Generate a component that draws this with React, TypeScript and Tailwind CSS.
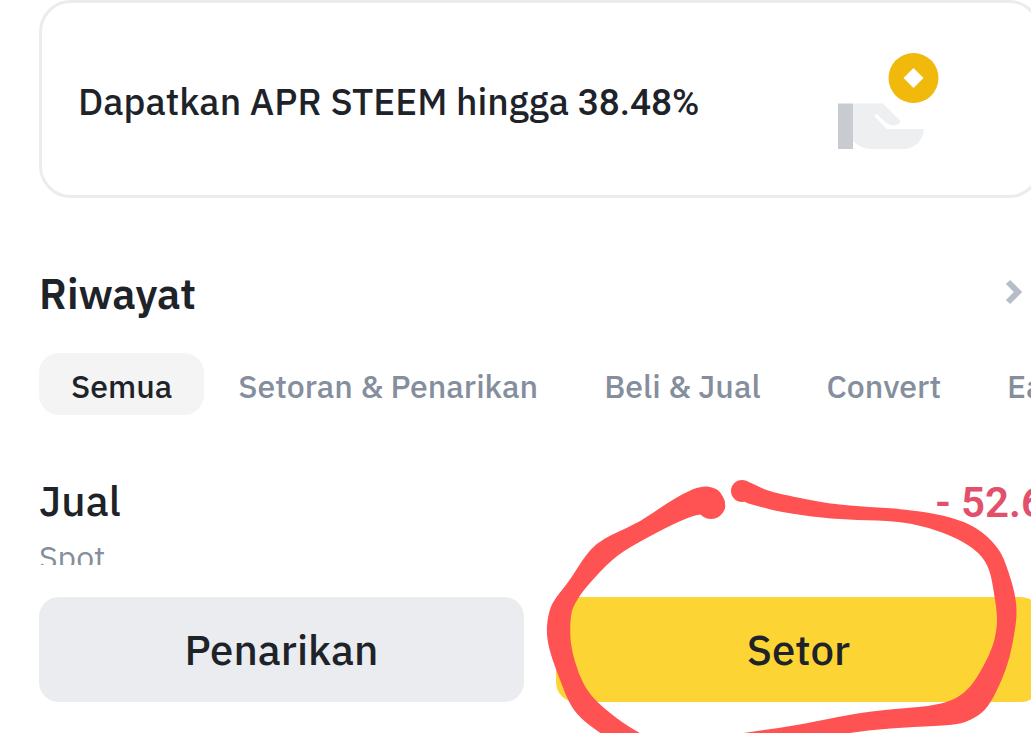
import { useState } from 'react';

type Point = [number, number];

const tabs = ['Semua', 'Setoran & Penarikan', 'Beli & Jual', 'Convert', 'Earn'];

// Outline of the left part of the marker stroke
const markerLeft: Point[] = [
  [711, 518], [724, 513], [726, 503], [720, 491], [712, 487], [703, 486], [690, 490], [667, 503],
  [640, 522], [613, 534], [597, 543], [585, 556], [568, 583], [556, 597], [549, 610], [546, 632],
  [550, 653], [560, 680], [569, 703], [580, 718], [600, 733], [640, 760], [690, 760], [639, 733],
  [617, 719], [590, 696], [578, 673], [571, 647], [570, 630], [571, 613], [575, 603], [585, 588],
  [613, 558], [637, 543], [677, 522], [701, 513],
];

// Outline of the part that runs over the top, down the right side and back
const markerRight: Point[] = [
  [741, 480], [750, 482], [763, 489], [780, 494], [830, 504], [870, 507], [903, 509], [937, 514],
  [963, 521], [983, 532], [1000, 550], [1007, 567], [1015, 593], [1017, 613], [1015, 630],
  [1010, 657], [1002, 680], [990, 704], [980, 715], [962, 724], [937, 726], [890, 728], [847, 733],
  [800, 742], [700, 742], [741, 733], [780, 728], [813, 722], [863, 712], [907, 708], [930, 706],
  [952, 701], [968, 690], [980, 673], [993, 647], [997, 627], [997, 613], [994, 593], [990, 570],
  [980, 553], [957, 538], [927, 527], [897, 521], [857, 520], [823, 518], [780, 512], [757, 506],
  [740, 501],
];

const smoothPath = (points: Point[]) => {
  const mid = (a: Point, b: Point) => `${(a[0] + b[0]) / 2} ${(a[1] + b[1]) / 2}`;
  const last = points[points.length - 1];
  const curves = points.map((p, i) => `Q ${p[0]} ${p[1]} ${mid(p, points[(i + 1) % points.length])}`);
  return `M ${mid(last, points[0])} ${curves.join(' ')} Z`;
};

const EarnIcon = () => (
  <svg width="101" height="97" viewBox="0 0 101 97" aria-hidden="true" className="shrink-0">
    <path d="M0 50.500H15V96H0Z" fill="#c8cbd0" />
    <path
      d="M15 50.500H45L62 67.500Q63 69 61.500 70.500Q58 73 53 72Q50 71.500 47 69L40 62Q38 60.500 37 62Q36 63 37 64L49 76H86Q84 91 72 95Q69 96 65 96H34Q23 96 15 88Z"
      fill="#edeff1"
    />
    <circle cx="75.500" cy="25" r="25" fill="#f0b90b" />
    <path d="M75.500 15L85.500 25L75.500 35L65.500 25Z" fill="#fff" />
  </svg>
);

const MarkerCircle = () => (
  <svg
    width="491"
    height="290"
    viewBox="540 470 491 290"
    aria-hidden="true"
    className="pointer-events-none absolute -left-4 -top-[127px] max-w-none"
    fill="#ff5252"
  >
    <path d={smoothPath(markerLeft)} />
    <circle cx="711" cy="505" r="14" />
    <path d={smoothPath(markerRight)} />
    <circle cx="742" cy="491" r="11" />
  </svg>
);

const App = () => {
  const [activeTab, setActiveTab] = useState('Semua');

  return (
    <div className="flex h-screen flex-col overflow-hidden bg-white font-['IBM_Plex_Sans','Noto_Sans',sans-serif] font-medium text-[#1e2329]">
      <main className="-mr-[10px] min-h-0 flex-1 overflow-hidden pl-[39px]">
        {/* Earn banner */}
        <a
          href="#earn"
          className="flex h-[198px] items-center justify-between rounded-[32px] border-[3px] border-[#eaecef] pl-9 pr-[99px] pt-1"
        >
          <span className="whitespace-nowrap pt-0.5 text-[37px] leading-[48px]">
            Dapatkan APR STEEM hingga <span className="font-[Roboto]">38.48%</span>
          </span>
          <EarnIcon />
        </a>

        {/* History header */}
        <div className="mt-[68px] flex items-center justify-between pr-[14px]">
          <h2 className="text-[42px] font-semibold leading-[56px]">Riwayat</h2>
          <button type="button" aria-label="Riwayat" className="pb-1">
            <svg width="22" height="26" viewBox="0 0 22 26" aria-hidden="true">
              <path d="M3 3L13 13L3 23" fill="none" stroke="#b7bdc6" strokeWidth="6" />
            </svg>
          </button>
        </div>

        <div className="mt-[31px] flex gap-0.5">
          {tabs.map((tab) => (
            <button
              key={tab}
              type="button"
              onClick={() => setActiveTab(tab)}
              className={`h-[62px] shrink-0 whitespace-nowrap rounded-[20px] px-8 pt-1 text-[32px] leading-[44px] ${
                tab === activeTab ? 'bg-[#f4f4f4]' : 'text-[#848e9c]'
              }`}
            >
              {tab}
            </button>
          ))}
        </div>

        {/* Latest transaction */}
        <div className="-mr-1 mt-[58px] flex justify-between whitespace-nowrap">
          <div>
            <p className="text-[42px] leading-[56px]">Jual</p>
            <p className="text-[32px] font-normal leading-[56px] text-[#848e9c]">Spot</p>
          </div>
          <p className="pt-0.5 font-[Roboto] text-[42px] font-semibold leading-[56px] text-[#e2506b]">
            - 52.6
          </p>
        </div>
      </main>

      <footer className="-mr-[10px] grid shrink-0 grid-cols-2 gap-8 pb-[31px] pl-[39px] pt-8 text-[42px] leading-[56px]">
        <button type="button" className="h-[105px] rounded-[20px] bg-[#eaecef]">
          Penarikan
        </button>
        <div className="relative">
          <button type="button" className="h-[105px] w-full rounded-[20px] bg-[#fcd535]">
            Setor
          </button>
          <MarkerCircle />
        </div>
      </footer>
    </div>
  );
};

export default App;
